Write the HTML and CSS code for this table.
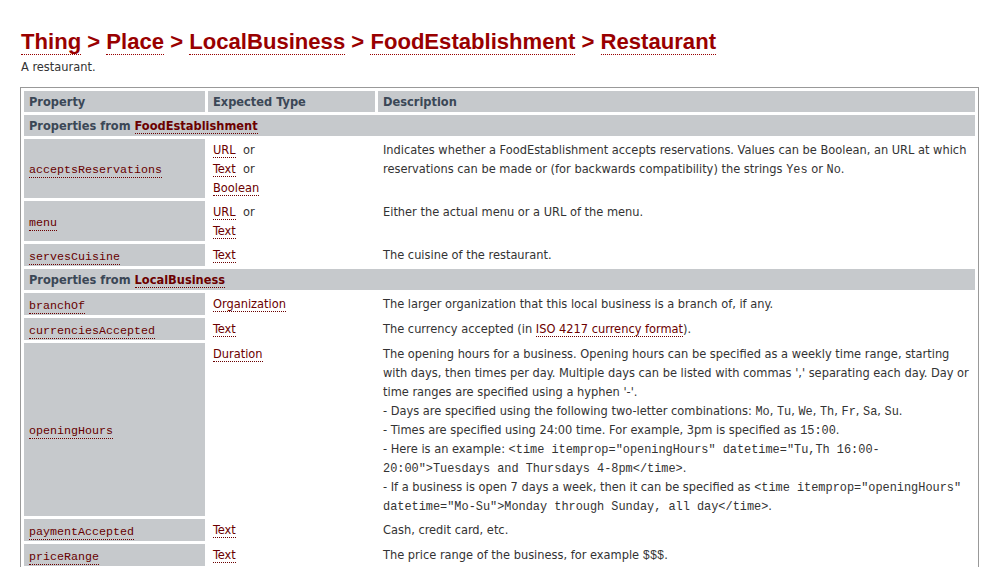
FILE: index.html
```html
<!DOCTYPE html>
<html>
<head>
<meta charset="utf-8">
<link rel="stylesheet" href="styles.css">
</head>
<body>
<h1 class="crumbs"><a href="#">Thing</a> &gt; <a href="#">Place</a> &gt; <a href="#">LocalBusiness</a> &gt; <a href="#">FoodEstablishment</a> &gt; <a href="#">Restaurant</a></h1>
<div class="summary">A restaurant.</div>
<table class="props">
<thead>
<tr><th class="c1">Property</th><th class="c2">Expected Type</th><th class="c3">Description</th></tr>
</thead>
<tbody>
<tr><th class="sect" colspan="3">Properties from <a href="#">FoodEstablishment</a></th></tr>
<tr><td class="prop"><code><a href="#">acceptsReservations</a></code></td><td class="type"><a href="#">URL</a>&nbsp; or<br><a href="#">Text</a>&nbsp; or<br><a href="#">Boolean</a></td><td class="desc">Indicates whether a FoodEstablishment accepts reservations. Values can be Boolean, an URL at which reservations can be made or (for backwards compatibility) the strings <code>Yes</code> or <code>No</code>.</td></tr>
<tr><td class="prop"><code><a href="#">menu</a></code></td><td class="type"><a href="#">URL</a>&nbsp; or<br><a href="#">Text</a></td><td class="desc">Either the actual menu or a URL of the menu.</td></tr>
<tr><td class="prop"><code><a href="#">servesCuisine</a></code></td><td class="type"><a href="#">Text</a></td><td class="desc">The cuisine of the restaurant.</td></tr>
<tr><th class="sect" colspan="3">Properties from <a href="#">LocalBusiness</a></th></tr>
<tr><td class="prop"><code><a href="#">branchOf</a></code></td><td class="type"><a href="#">Organization</a></td><td class="desc">The larger organization that this local business is a branch of, if any.</td></tr>
<tr><td class="prop"><code><a href="#">currenciesAccepted</a></code></td><td class="type"><a href="#">Text</a></td><td class="desc">The currency accepted (in <a href="#">ISO 4217 currency format</a>).</td></tr>
<tr><td class="prop"><code><a href="#">openingHours</a></code></td><td class="type"><a href="#">Duration</a></td><td class="desc">The opening hours for a business. Opening hours can be specified as a weekly time range, starting with days, then times per day. Multiple days can be listed with commas ',' separating each day. Day or time ranges are specified using a hyphen '-'.<br>- Days are specified using the following two-letter combinations: <code>Mo</code>, <code>Tu</code>, <code>We</code>, <code>Th</code>, <code>Fr</code>, <code>Sa</code>, <code>Su</code>.<br>- Times are specified using 24:00 time. For example, 3pm is specified as <code>15:00</code>. <br>- Here is an example: <code>&lt;time itemprop="openingHours" datetime="Tu,Th 16:00-20:00"&gt;Tuesdays and Thursdays 4-8pm&lt;/time&gt;</code>. <br>- If a business is open 7 days a week, then it can be specified as <code>&lt;time itemprop="openingHours" datetime="Mo-Su"&gt;Monday through Sunday, all day&lt;/time&gt;</code>.</td></tr>
<tr><td class="prop"><code><a href="#">paymentAccepted</a></code></td><td class="type"><a href="#">Text</a></td><td class="desc">Cash, credit card, etc.</td></tr>
<tr><td class="prop"><code><a href="#">priceRange</a></code></td><td class="type"><a href="#">Text</a></td><td class="desc">The price range of the business, for example <code>$$$</code>.</td></tr>
</tbody>
</table>
</body>
</html>
```
FILE: styles.css
```css
body {
  margin: 0;
  padding: 0 21px;
  background: #fff;
  color: #333;
  font-family: "DejaVu Sans Condensed", "DejaVu Sans", sans-serif;
  font-size: 12.7px;
}
a {
  color: #6b0000;
  text-decoration: none;
  border-bottom: 1px dotted #6b0000;
}
.crumbs {
  margin: 0;
  padding-top: 29px;
  font-family: "Liberation Sans", Arial, sans-serif;
  font-size: 22.1px;
  font-weight: bold;
  line-height: 25px;
  color: #990000;
}
.crumbs a {
  color: #990000;
  border-bottom: 1px dotted #990000;
}
.summary {
  line-height: 14px;
  margin-top: 6px;
  color: #333;
}
.props {
  margin-top: 13px;
  margin-left: -1px;
  width: 959px;
  border: 1px solid #999;
  border-spacing: 3px;
}
.props th {
  background: #c6c9cc;
  color: #3b4756;
  font-weight: bold;
  text-align: left;
  height: 21px;
  padding: 0 5px;
  line-height: 19px;
}
.c1 { width: 171px; }
.c2 { width: 157px; }
.props td {
  vertical-align: top;
  height: 20px;
  padding: 1px 5px;
  line-height: 19px;
}
.props td.prop {
  background: #c6c9cc;
  vertical-align: middle;
}
code {
  font-family: "Liberation Mono", "Courier New", monospace;
  font-size: 11.67px;
  line-height: 1;
}
.desc code {
  font-size: 11.9px;
}
.prop a {
  color: #660000;
}
```
